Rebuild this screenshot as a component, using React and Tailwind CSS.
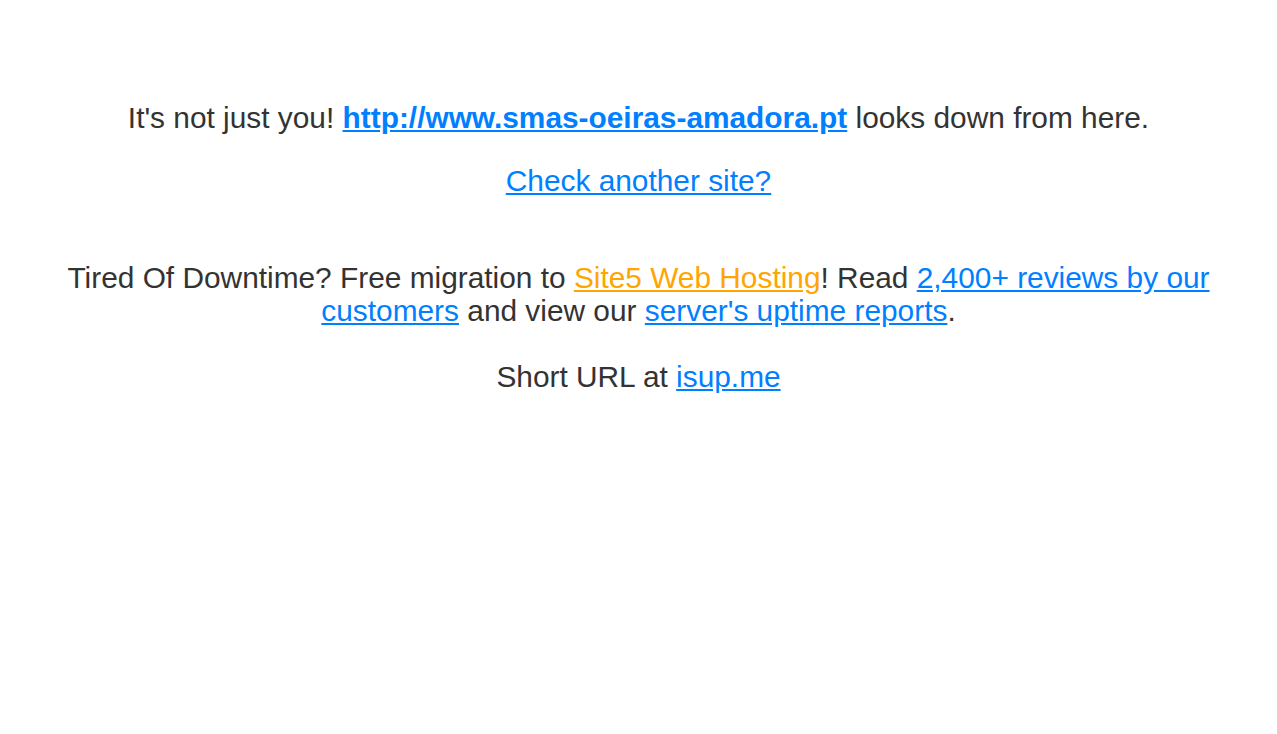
import React from "react";

const App = () => {
  return (
    <div className="min-h-screen bg-white text-center text-[29.85px] leading-[33px] text-[#333333] font-['Liberation_Sans',Arial,sans-serif] px-[8px] pt-[101px]">
      <p>
        It's not just you!{" "}
        <a href="#" className="font-bold text-[#007fff] underline">
          http://www.smas-oeiras-amadora.pt
        </a>{" "}
        looks down from here.
      </p>
      <p className="mt-[30px]">
        <a href="#" className="text-[#007fff] underline">
          Check another site?
        </a>
      </p>
      <p className="mt-[64px] px-[52px]">
        Tired Of Downtime? Free migration to{" "}
        <a href="#" className="text-[#ffa500] underline">
          Site5 Web Hosting
        </a>
        ! Read{" "}
        <a href="#" className="text-[#007fff] underline">
          2,400+ reviews by our customers
        </a>{" "}
        and view our{" "}
        <a href="#" className="text-[#007fff] underline">
          server's uptime reports
        </a>
        .
      </p>
      <p className="mt-[33px]">
        Short URL at{" "}
        <a href="#" className="text-[#007fff] underline">
          isup.me
        </a>
      </p>
    </div>
  );
};

export default App;
